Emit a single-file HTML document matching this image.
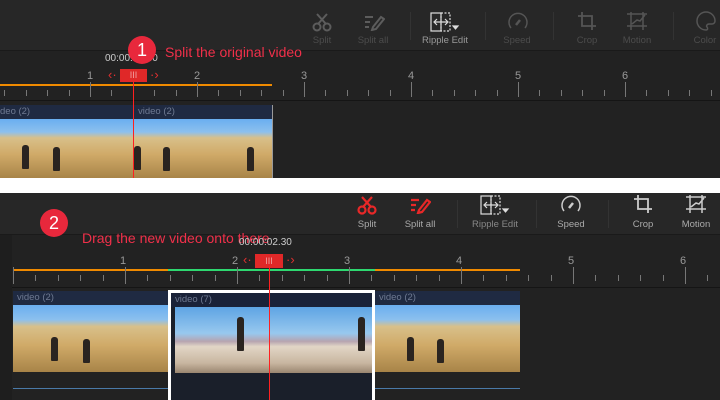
<!DOCTYPE html><html><head><style>
*{margin:0;padding:0;box-sizing:border-box}
body{width:720px;height:400px;background:#fff;position:relative;overflow:hidden;font-family:"Liberation Sans",sans-serif}
.p{position:absolute;left:0;width:720px;background:#222}
.a{position:absolute}
.lbl{position:absolute;font-size:9.5px;text-align:center;width:60px;margin-left:-30px}
.num{position:absolute;font-size:11px;color:#999;width:20px;margin-left:-10px;text-align:center}
.tick{position:absolute;width:1px;background:#777}
.hdr{position:absolute;background:#1f2a42;color:#6f7a92;font-size:9.5px;padding-left:4px;line-height:14px}
.img{position:absolute;overflow:hidden;background:linear-gradient(180deg,#6aaef0 0%,#8cc0ee 22%,#d8c08a 32%,#d0aa68 60%,#a88448 100%)}
.img2{position:absolute;overflow:hidden;background:linear-gradient(180deg,#5ea4e4 0%,#98c8ee 40%,#b6a4b0 52%,#e2d6c6 60%,#c8b6a0 85%,#9a8670 100%)}
.f{position:absolute;width:7px;height:24px;background:#2a2420;border-radius:3px 3px 1px 1px}
.sep{position:absolute;width:1px;background:#333}
.ph{position:absolute;width:1px;background:#ff2020;z-index:10}
</style></head><body>
<div class="p" style="top:0;height:178px;background:#222"></div>
<div class="a" style="top:0;left:0;width:720px;height:51px;background:#272727;border-bottom:1px solid #1a1a1a"></div>
<div class="sep" style="left:410px;top:12px;height:28px"></div>
<div class="sep" style="left:485px;top:12px;height:28px"></div>
<div class="sep" style="left:553px;top:12px;height:28px"></div>
<div class="sep" style="left:673px;top:12px;height:28px"></div>
<svg class="a" style="left:312px;top:12px" width="20" height="20" viewBox="0 0 20 20" fill="none" stroke="#5c5c5c" stroke-width="2"><circle cx="5" cy="15" r="3.5"/><circle cx="15" cy="15" r="3.5"/><path d="M6 12L15 2M14 12L5 2"/></svg>
<div class="lbl" style="left:322px;top:35px;color:#4c4c4c">Split</div>
<svg class="a" style="left:363px;top:13px" width="22" height="18" viewBox="0 0 22 18" fill="none" stroke="#5c5c5c" stroke-width="2"><path d="M2 4h8M2 9h5M2 14h4M10 14l8-10 3 2-8 10-4 1z"/></svg>
<div class="lbl" style="left:373px;top:35px;color:#4c4c4c">Split all</div>
<svg class="a" style="left:430px;top:12px" width="30" height="20" viewBox="0 0 30 20" fill="none" stroke="#ddd" stroke-width="1.2"><rect x="1" y="1" width="10" height="18"/><rect x="11" y="1" width="9" height="18" stroke-dasharray="2 1.5"/><path d="M5 10h12M7 7l-3 3 3 3M15 7l3 3-3 3"/><path d="M23 14h5l-2.5 3z" fill="#ddd"/></svg>
<div class="lbl" style="left:445px;top:35px;color:#999;width:80px;margin-left:-40px">Ripple Edit</div>
<svg class="a" style="left:507px;top:11px" width="22" height="20" viewBox="0 0 22 20" fill="none" stroke="#555" stroke-width="1.5"><path d="M4 17A9 9 0 1 1 18 17"/><path d="M9 14l4-5" stroke-width="2.5"/></svg>
<div class="lbl" style="left:517px;top:35px;color:#4c4c4c">Speed</div>
<svg class="a" style="left:577px;top:11px" width="20" height="20" viewBox="0 0 20 20" fill="none" stroke="#555" stroke-width="1.8"><path d="M5 1v14h14M1 5h14v14"/></svg>
<div class="lbl" style="left:587px;top:35px;color:#4c4c4c">Crop</div>
<svg class="a" style="left:626px;top:11px" width="22" height="20" viewBox="0 0 22 20" fill="none" stroke="#555" stroke-width="1.5"><path d="M1 3h20M1 15h20M5 1v18M17 1v18M6 13l5-4 3 1 5-6"/></svg>
<div class="lbl" style="left:637px;top:35px;color:#4c4c4c">Motion</div>
<svg class="a" style="left:695px;top:11px" width="22" height="20" viewBox="0 0 22 20" fill="none" stroke="#555" stroke-width="1.5"><path d="M11 1a9 9 0 1 0 0 18c2 0 2-2 1-3s0-3 2-3h3a3 3 0 0 0 3-3A9 9 0 0 0 11 1z"/></svg>
<div class="lbl" style="left:705px;top:35px;color:#4c4c4c">Color</div>
<div class="a" style="left:0;top:84px;width:272px;height:2px;background:#f08a00"></div>
<div class="a" style="left:0;top:100px;width:720px;height:1px;background:#151515"></div>
<div id="t1"></div>
<div class="num" style="left:90px;top:70px">1</div><div class="num" style="left:197px;top:70px">2</div><div class="num" style="left:304px;top:70px">3</div><div class="num" style="left:411px;top:70px">4</div><div class="num" style="left:518px;top:70px">5</div><div class="num" style="left:625px;top:70px">6</div>
<div class="a" style="left:105px;top:53px;font-size:10px;color:#ccc">00:00:01:40</div>
<div class="a" style="left:120px;top:69px;width:27px;height:13px;background:#e02828;color:#f0a0a0;font-size:9px;text-align:center;line-height:13px">III</div>
<div class="a" style="left:108px;top:67px;color:#e03030;font-size:13px">‹·</div>
<div class="a" style="left:150px;top:67px;color:#e03030;font-size:13px">·›</div>
<div class="a" style="left:128px;top:36px;width:28px;height:28px;border-radius:50%;background:#e8283c;color:#fff;font-size:18px;text-align:center;line-height:28px">1</div>
<div class="a" style="left:165px;top:44px;color:#f0304a;font-size:14px">Split the original video</div>
<div class="hdr" style="left:0;top:105px;width:133px;padding-left:0">deo (2)</div>
<div class="hdr" style="left:134px;top:105px;width:138px">video (2)</div>
<div class="img" style="left:0;top:119px;width:272px;height:59px">
<div class="f" style="left:22px;top:26px"></div><div class="f" style="left:53px;top:28px"></div><div class="f" style="left:134px;top:27px"></div><div class="f" style="left:163px;top:28px"></div><div class="f" style="left:247px;top:28px"></div></div>
<div class="a" style="left:272px;top:105px;width:1px;height:73px;background:#999"></div>
<div class="ph" style="left:133px;top:82px;height:96px"></div>
<div class="p" style="top:193px;height:207px;background:#222"></div>
<div class="a" style="top:193px;left:0;width:720px;height:42px;background:#272727;border-bottom:1px solid #1a1a1a"></div>
<div class="sep" style="left:457px;top:200px;height:28px"></div>
<div class="sep" style="left:536px;top:200px;height:28px"></div>
<div class="sep" style="left:608px;top:200px;height:28px"></div>
<svg class="a" style="left:357px;top:195px" width="20" height="20" viewBox="0 0 20 20" fill="none" stroke="#e82828" stroke-width="2.2"><circle cx="5" cy="15" r="3.5"/><circle cx="15" cy="15" r="3.5"/><path d="M6 12L15 2M14 12L5 2"/></svg>
<div class="lbl" style="left:367px;top:219px;color:#aaa">Split</div>
<svg class="a" style="left:409px;top:196px" width="22" height="18" viewBox="0 0 22 18" fill="none" stroke="#e82828" stroke-width="2.2"><path d="M2 4h8M2 9h5M2 14h4M10 14l8-10 3 2-8 10-4 1z"/></svg>
<div class="lbl" style="left:420px;top:219px;color:#aaa">Split all</div>
<svg class="a" style="left:480px;top:195px" width="30" height="20" viewBox="0 0 30 20" fill="none" stroke="#ddd" stroke-width="1.2"><rect x="1" y="1" width="10" height="18"/><rect x="11" y="1" width="9" height="18" stroke-dasharray="2 1.5"/><path d="M5 10h12M7 7l-3 3 3 3M15 7l3 3-3 3"/><path d="M23 14h5l-2.5 3z" fill="#ddd"/></svg>
<div class="lbl" style="left:495px;top:219px;color:#888;width:80px;margin-left:-40px">Ripple Edit</div>
<svg class="a" style="left:560px;top:194px" width="22" height="20" viewBox="0 0 22 20" fill="none" stroke="#ccc" stroke-width="1.5"><path d="M4 17A9 9 0 1 1 18 17"/><path d="M9 14l4-5" stroke-width="2.5"/></svg>
<div class="lbl" style="left:571px;top:219px;color:#aaa">Speed</div>
<svg class="a" style="left:633px;top:194px" width="20" height="20" viewBox="0 0 20 20" fill="none" stroke="#ccc" stroke-width="1.8"><path d="M5 1v14h14M1 5h14v14"/></svg>
<div class="lbl" style="left:643px;top:219px;color:#aaa">Crop</div>
<svg class="a" style="left:685px;top:194px" width="22" height="20" viewBox="0 0 22 20" fill="none" stroke="#ccc" stroke-width="1.5"><path d="M1 3h20M1 15h20M5 1v18M17 1v18M6 13l5-4 3 1 5-6"/></svg>
<div class="lbl" style="left:696px;top:219px;color:#aaa">Motion</div>
<div class="a" style="left:13px;top:269px;width:155px;height:2px;background:#f08a00"></div>
<div class="a" style="left:168px;top:269px;width:207px;height:2px;background:#2ed870"></div>
<div class="a" style="left:375px;top:269px;width:145px;height:2px;background:#f08a00"></div>
<div class="a" style="left:0;top:287px;width:720px;height:1px;background:#151515"></div>
<div class="a" style="left:0;top:235px;width:12px;height:165px;background:#1e1e1e"></div>
<div id="t2"></div>
<div class="num" style="left:123px;top:255px">1</div><div class="num" style="left:235px;top:255px">2</div><div class="num" style="left:347px;top:255px">3</div><div class="num" style="left:459px;top:255px">4</div><div class="num" style="left:571px;top:255px">5</div><div class="num" style="left:683px;top:255px">6</div>
<div class="a" style="left:40px;top:209px;width:28px;height:28px;border-radius:50%;background:#e8283c;color:#fff;font-size:18px;text-align:center;line-height:28px">2</div>
<div class="a" style="left:82px;top:230px;color:#f0304a;font-size:14px">Drag the new video onto there</div>
<div class="a" style="left:239px;top:237px;font-size:10px;color:#ccc">00:00:02.30</div>
<div class="a" style="left:255px;top:254px;width:28px;height:14px;background:#e02828;color:#f0a0a0;font-size:9px;text-align:center;line-height:14px">III</div>
<div class="a" style="left:243px;top:252px;color:#e03030;font-size:13px">‹·</div>
<div class="a" style="left:286px;top:252px;color:#e03030;font-size:13px">·›</div>
<div class="hdr" style="left:13px;top:291px;width:155px">video (2)</div>
<div class="img" style="left:13px;top:305px;width:155px;height:67px"><div class="f" style="left:38px;top:32px"></div><div class="f" style="left:70px;top:34px"></div></div>
<div class="a" style="left:168px;top:290px;width:207px;height:110px;border:3px solid #fff;border-bottom:none;background:#1a1f2a"></div>
<div class="hdr" style="left:171px;top:293px;width:201px;background:#1a2238">video (7)</div>
<div class="img2" style="left:175px;top:307px;width:197px;height:66px"><div class="f" style="left:62px;top:10px;height:34px"></div><div class="f" style="left:183px;top:10px;height:34px"></div></div>
<div class="hdr" style="left:375px;top:291px;width:145px">video (2)</div>
<div class="img" style="left:375px;top:305px;width:145px;height:67px"><div class="f" style="left:32px;top:32px"></div><div class="f" style="left:62px;top:34px"></div></div>
<div class="a" style="left:13px;top:388px;width:155px;height:1px;background:#4a7aa8"></div>
<div class="a" style="left:375px;top:388px;width:145px;height:1px;background:#4a7aa8"></div>
<div class="ph" style="left:269px;top:266px;height:134px"></div>
<div class="a" style="left:0;top:178px;width:720px;height:15px;background:#fff;z-index:20"></div>
<script>
function ticks(id,start,step,y,bigH,smallH,end){var h='';for(var x=start,i=0;x<end;x+=step/5,i++){var b=i%5==0;h+='<div class="tick" style="left:'+Math.round(x)+'px;top:'+(b?y-4:y+4)+'px;height:'+(b?bigH:smallH)+'px"></div>';}document.getElementById(id).innerHTML=h;}
ticks('t1',90-107,107,86,15,6,720);
ticks('t2',13,112,271,17,6,720);
</script>
</body></html>
